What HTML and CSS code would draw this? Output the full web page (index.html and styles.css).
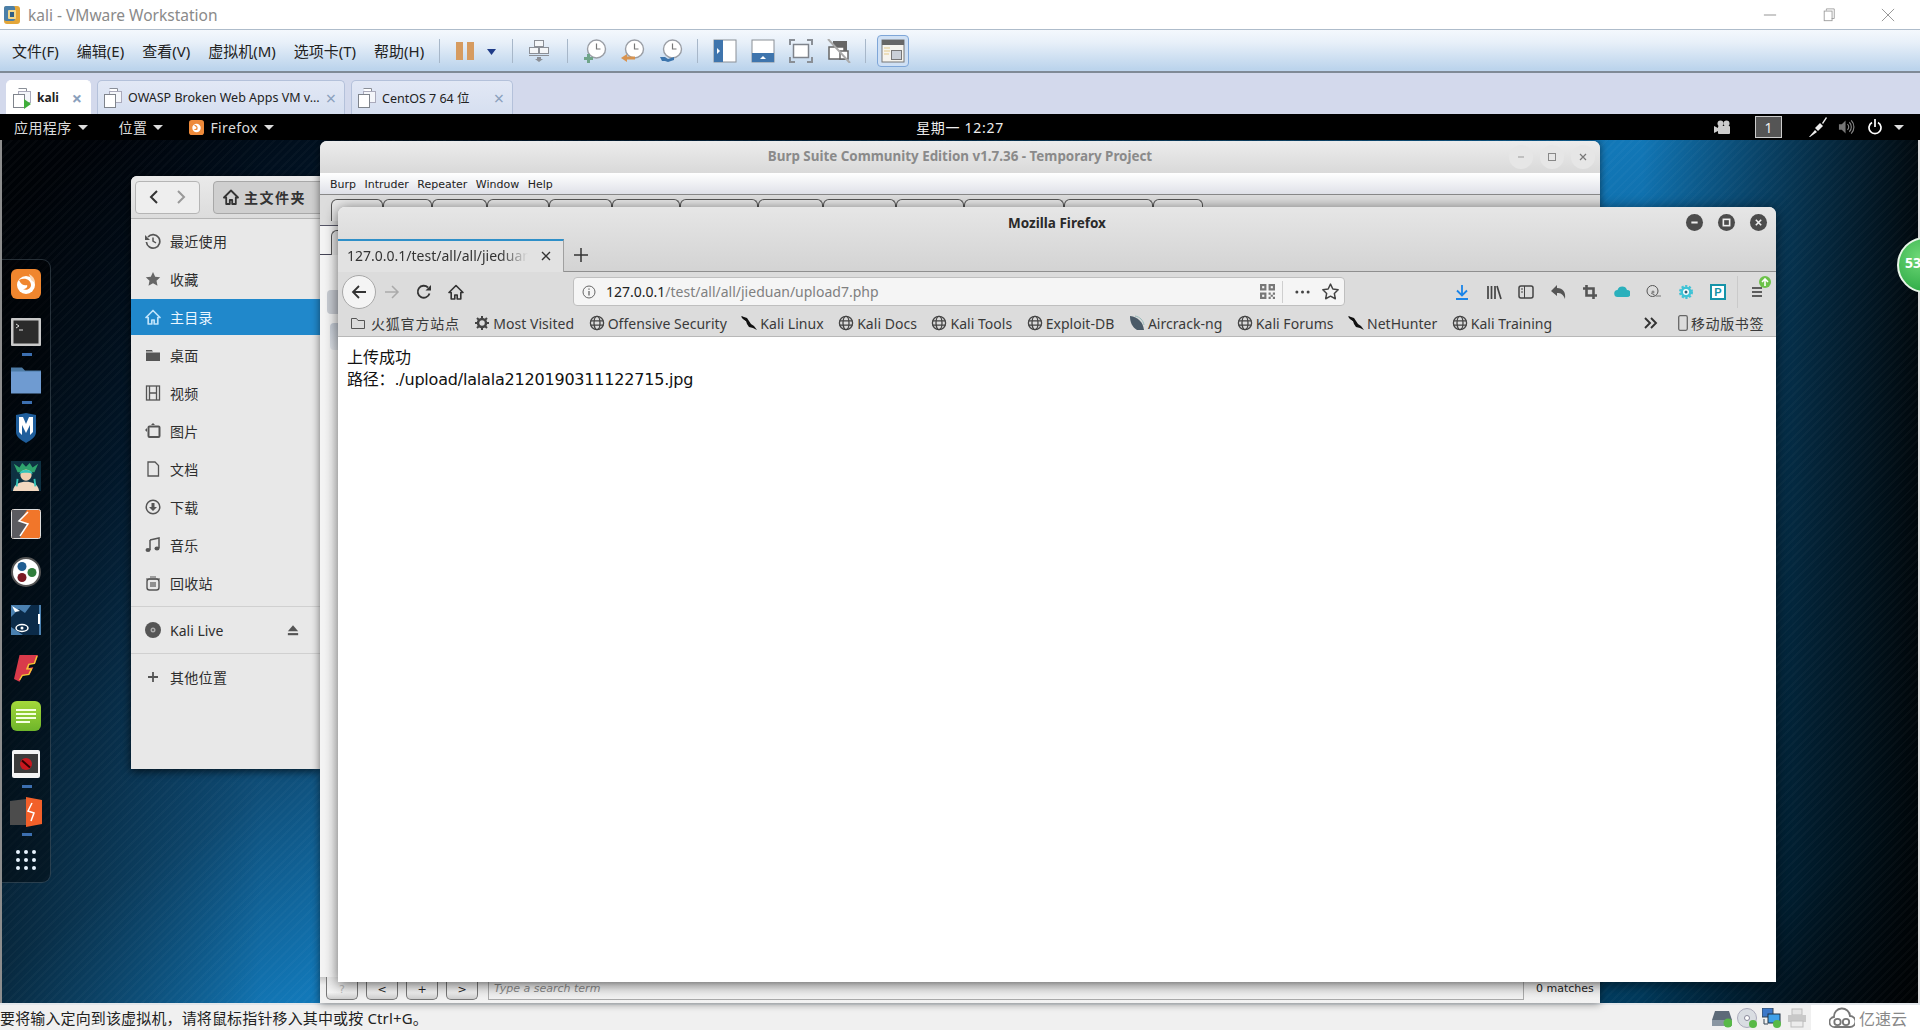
FILE: index.html
```html
<!DOCTYPE html>
<html lang="zh-CN">
<head>
<meta charset="utf-8">
<title>kali - VMware Workstation</title>
<link rel="stylesheet" href="styles.css">
</head>
<body>
<svg class="defs" width="0" height="0">
  <symbol id="globe" viewBox="0 0 16 16"><g fill="none" stroke="#444" stroke-width="1.3"><circle cx="8" cy="8" r="6.6"/><ellipse cx="8" cy="8" rx="3" ry="6.6"/><path d="M1.6 5.8h12.8M1.6 10.2h12.8"/></g></symbol>
  <symbol id="dragon" viewBox="0 0 16 16"><path d="M0 1l3 1 3 1 2 3 2 3 3 2 3 4-4-2-4-1-2-3-1-3-3-2z" fill="#111"/><path d="M1 2l5 4" stroke="#111" stroke-width="1.4"/></symbol>
  <symbol id="page" viewBox="0 0 20 22"><path d="M6.5 1.5h8v3h4v11h-6" fill="#fff" stroke="#8a8f98"/><rect x="6.5" y="4.5" width="12" height="11" fill="#f4f6fa" stroke="#aab"/><rect x="1.5" y="7.5" width="11" height="13" fill="#fff" stroke="#7f848c"/></symbol>
</svg>
<div class="app">
  <header class="titlebar">
    <svg class="vmlogo" viewBox="0 0 18 20"><rect x="1" y="1" width="16" height="18" rx="3" fill="#e3a63a"/><rect x="1" y="1" width="11" height="15" rx="2" fill="#4b7fa8"/><rect x="5" y="5" width="8" height="9" rx="1" fill="#f4d98c"/><rect x="7" y="7" width="4" height="5" fill="#2f5f86"/></svg>
    <span class="apptitle">kali - VMware Workstation</span>
    <div class="winctl">
      <svg viewBox="0 0 16 16"><path d="M1 8h14" stroke="#9a9a9a" stroke-width="1.2"/></svg>
      <svg viewBox="0 0 16 16"><path d="M5 3V1h9v11h-3" fill="none" stroke="#9a9a9a"/><rect x="2.500" y="3.500" width="9" height="11" fill="none" stroke="#9a9a9a"/></svg>
      <svg viewBox="0 0 16 16"><path d="M1 1l14 14M15 1L1 15" stroke="#8a8a8a"/></svg>
    </div>
  </header>

  <nav class="toolbar">
    <ul class="menus">
      <li>文件(F)</li><li>编辑(E)</li><li>查看(V)</li><li>虚拟机(M)</li><li>选项卡(T)</li><li>帮助(H)</li>
    </ul>
    <div class="tbgroup first">
      <svg class="tb18" viewBox="0 0 18 24"><rect y="3" width="7" height="18" fill="#d69b60"/><rect x="11" y="3" width="7" height="18" fill="#d69b60"/></svg>
      <svg class="tb9" viewBox="0 0 9 24"><path d="M0 10h9l-4.500 6z" fill="#1f3c88"/></svg>
    </div>
    <div class="tbgroup send">
      <svg class="tb20" viewBox="0 0 20 24"><g fill="#f4f6f8" stroke="#8b8f96"><rect x="5.500" y="1.500" width="9" height="6"/><rect x=".5" y="8.500" width="9" height="6"/><rect x="10.500" y="8.500" width="9" height="6"/></g><path d="M0 16.500h20" stroke="#8b8f96"/><path d="M8 18h4v2h2l-4 3-4-3h2z" fill="#8b8f96"/></svg>
    </div>
    <div class="tbgroup">
      <svg class="tb24" viewBox="0 0 24 24"><circle cx="13.500" cy="10" r="9" fill="#fff" stroke="#9a9ea5" stroke-width="1.400"/><path d="M13.500 4.500V10h4" fill="none" stroke="#777" stroke-width="1.200"/><path d="M4 15h3v3h3v3H7v3H4v-3H1v-3h3z" fill="#6fa58a"/></svg>
      <svg class="tb24" viewBox="0 0 24 24"><circle cx="13.500" cy="10" r="9" fill="#fff" stroke="#9a9ea5" stroke-width="1.400"/><path d="M13.500 4.500V10h4" fill="none" stroke="#777" stroke-width="1.200"/><path d="M0 19l6-4v2.500h8v3H6V23z" fill="#d8934f"/></svg>
      <svg class="tb24" viewBox="0 0 24 24"><circle cx="13.500" cy="10" r="9" fill="#fff" stroke="#9a9ea5" stroke-width="1.400"/><path d="M13.500 4.500V10h4" fill="none" stroke="#777" stroke-width="1.200"/><path d="M1 18h5l3 2 6-2v3l-6 2-3-1H3z" fill="#3c75ad"/></svg>
    </div>
    <div class="tbgroup last">
      <svg class="tb24" viewBox="0 0 24 24"><rect x="1" y="1" width="22" height="22" fill="#fff" stroke="#8a8f96"/><rect x="1" y="1" width="9" height="22" fill="#3f75ad"/><path d="M4 9l3 3-3 3z" fill="#fff"/></svg>
      <svg class="tb24" viewBox="0 0 24 24"><rect x="1" y="1" width="22" height="22" fill="#fff" stroke="#8a8f96"/><rect x="1" y="14" width="22" height="9" fill="#3f75ad"/><path d="M9 20l3-3 3 3z" fill="#fff"/></svg>
      <svg class="tb24" viewBox="0 0 24 24"><rect x="4.500" y="5.500" width="15" height="13" fill="#fff" stroke="#7f848c" stroke-width="1.500"/><path d="M1 6V1h5M18 1h5v5M23 18v5h-5M6 23H1v-5" fill="none" stroke="#8a8f96" stroke-width="2"/></svg>
      <svg class="tb24" viewBox="0 0 24 24"><rect x="6" y="2" width="14" height="13" fill="#666"/><rect x="2" y="8" width="15" height="12" fill="#fff" stroke="#666" stroke-width="1.500"/><rect x="13" y="12" width="8" height="8" fill="#fff" stroke="#666" stroke-width="1.500"/><path d="M1 0l22 24" stroke="#aaa" stroke-width="2"/></svg>
    </div>
    <button class="tbbtn" type="button" aria-label="库">
      <svg class="tb24" viewBox="0 0 24 24"><rect x="1" y="1" width="22" height="22" fill="#f6f4ee" stroke="#777"/><rect x="1" y="1" width="22" height="5" fill="#666"/><path d="M3 9h6M3 12h6M3 15h5" stroke="#e3c98a"/><rect x="10.500" y="11.500" width="10" height="9" fill="#c9cfd8" stroke="#777"/></svg>
    </button>
  </nav>

  <div class="tabstrip">
    <div class="vmtab active">
      <svg class="tabic" viewBox="0 0 20 22"><use href="#page"/><path d="M12 12l7 5-7 5z" fill="#3fae3a"/></svg>
      <span>kali</span><i>×</i>
    </div>
    <div class="vmtab owasp"><svg class="tabic" viewBox="0 0 20 22"><use href="#page"/></svg><span>OWASP Broken Web Apps VM v...</span><i>×</i></div>
    <div class="vmtab centos"><svg class="tabic" viewBox="0 0 20 22"><use href="#page"/></svg><span>CentOS 7 64 位</span><i>×</i></div>
  </div>

  <main class="guest">
    <div class="panel">
      <div class="pleft">
        <span class="pitem apps">应用程序<b class="caret"></b></span>
        <span class="pitem places">位置<b class="caret"></b></span>
        <span class="pitem fx">
          <svg class="pfx" viewBox="0 0 16 16"><rect width="16" height="16" rx="3" fill="#ee8a3a"/><circle cx="8" cy="8.500" r="4.500" fill="#fff"/><path d="M5 5c3 0 5 2 4 5-1 1-3 1-4 0 2 0 3-1 3-2z" fill="#ee8a3a"/></svg>
          Firefox<b class="caret"></b>
        </span>
      </div>
      <div class="pclock">星期一 12:27</div>
      <div class="pright">
        <svg class="pcam" viewBox="0 0 16 14"><circle cx="6.500" cy="3.500" r="3" fill="#ccc"/><circle cx="12.500" cy="3.500" r="3" fill="#ccc"/><rect x="4" y="6" width="12" height="8" rx="1" fill="#ccc"/><path d="M0 6l4 2v3l-4 2z" fill="#ccc"/></svg>
        <span class="wsbox">1</span>
        <svg class="pnet" viewBox="0 0 18 20"><path d="M0 20l6-7 2 2-7 5z" fill="#eee"/><path d="M6 11l5-5 3 3-5 5z" fill="#eee"/><path d="M13 6l4-6 1 1-4 6z" fill="#eee"/></svg>
        <svg class="pvol" viewBox="0 0 18 18"><path d="M1 6h3l4-4v14l-4-4H1z" fill="#777"/><path d="M10 6a4 4 0 010 6M12 4a7 7 0 010 10M14 2a10 10 0 010 14" fill="none" stroke="#888" stroke-width="1.200"/></svg>
        <svg class="ppow" viewBox="0 0 14 16"><path d="M4 3.500a6 6 0 106 0" fill="none" stroke="#fff" stroke-width="1.700"/><path d="M7 0v8" stroke="#fff" stroke-width="1.700"/></svg>
        <b class="caret"></b>
      </div>
    </div>

    <div class="desktop">
      <aside class="dock">
        <div class="dockitem"><svg viewBox="0 0 30 30"><rect width="30" height="30" rx="6" fill="#f0862e"/><circle cx="15" cy="16" r="9" fill="#fff"/><path d="M8 11c6-3 12 0 12 5 0 4-5 6-8 4 3 0 5-2 4-4-2 1-6 0-8-5z" fill="#f0862e"/><path d="M18 5c4 2 6 5 6 9l-4-3z" fill="#fbd9b8"/></svg></div>
        <div class="dockitem run"><svg viewBox="0 0 30 28"><rect width="30" height="28" rx="1" fill="#c9c9c9"/><rect x="2.500" y="2.500" width="25" height="23" fill="#2b2b2b"/><path d="M5 6l3 2-3 2M8 12h4" stroke="#ddd" fill="none"/></svg></div>
        <div class="dockitem run"><svg viewBox="0 0 30 27"><path d="M0 2V1h11l3 3h16v5H0z" fill="#4d7ba6"/><rect y="5" width="30" height="22" fill="#6f9bd1"/></svg></div>
        <div class="dockitem"><svg class="d-tall" viewBox="0 0 24 30"><path d="M12 0l10 2v17c0 5-5 8-10 11C7 27 2 24 2 19V2z" fill="#1f5e9c"/><path d="M5 4h4l3 7 3-7h4v15l-3 3V12l-4 8-4-8v10l-3-3z" fill="#fff"/></svg></div>
        <div class="dockitem"><svg viewBox="0 0 32 32"><rect width="32" height="32" fill="#0e3142"/><path d="M7 12L3 3l6 4 3-5 4 4 4-4 3 5 6-4-4 9z" fill="#2fa36d"/><circle cx="16" cy="15" r="6" fill="#f2cfb0"/><path d="M9 14c0-6 14-6 14 0-3-2-11-2-14 0z" fill="#35c4b8"/><path d="M2 32c1-8 8-10 14-10s13 2 14 10z" fill="#f2d8c0"/><path d="M7 19l-1 8M25 19l1 8" stroke="#35c4b8" stroke-width="2"/></svg></div>
        <div class="dockitem"><svg viewBox="0 0 30 30"><rect x=".5" y=".5" width="29" height="29" rx="2" fill="#f1762a" stroke="#ddd"/><path d="M1 1h15l-7 11 8 3-8 14H1z" fill="#5b5b60"/><path d="M17 3L8 12l9 3-8 12" fill="none" stroke="#fff" stroke-width="1.500"/></svg></div>
        <div class="dockitem"><svg viewBox="0 0 30 30"><circle cx="15" cy="15" r="14" fill="#fff" stroke="#555" stroke-width="2"/><circle cx="11" cy="9.500" r="4.500" fill="#1f5d91"/><circle cx="21" cy="15.500" r="4.500" fill="#2f7d3b"/><circle cx="11" cy="20.500" r="4.500" fill="#7a1a24"/></svg></div>
        <div class="dockitem"><svg viewBox="0 0 30 30"><rect width="30" height="30" fill="#4a80b0"/><path d="M0 12L8 4l6 4 6-8h8v30H12L0 22z" fill="#0b2b49"/><path d="M1 1l8 5-5 1z" fill="#fff"/><ellipse cx="11" cy="23" rx="6" ry="3.500" fill="none" stroke="#fff" stroke-width="1.500"/><circle cx="11" cy="23" r="1.500" fill="#fff"/><path d="M28 9v10" stroke="#fff" stroke-width="2"/></svg></div>
        <div class="dockitem"><svg class="d-tall" viewBox="0 0 26 30"><path d="M6 1h20l-3 9-6 1-1 4 5-1-4 8-8 1-3 7-6-3z" fill="#d93a4a"/><path d="M25 2l-3 8-6 1-2 5h5l-3 6-7 1-3 5" fill="none" stroke="#f3c934" stroke-width="1.500"/></svg></div>
        <div class="dockitem"><svg viewBox="0 0 30 30"><defs><linearGradient id="gn" x1="0" y1="0" x2="0" y2="1"><stop offset="0" stop-color="#a4d93a"/><stop offset="1" stop-color="#6eb52a"/></linearGradient></defs><rect width="30" height="30" rx="6" fill="url(#gn)"/><path d="M5 9h20M5 13h20M5 17h20M5 21h14" stroke="#f4ffe0" stroke-width="2"/></svg></div>
        <div class="dockitem run"><svg class="d-w28" viewBox="0 0 28 28"><rect width="28" height="28" rx="2" fill="#f4f4f4"/><rect x="2" y="4" width="24" height="19" fill="#3b3b3b"/><circle cx="14" cy="14" r="6" fill="#c9171e"/><path d="M10 10.500l8 7" stroke="#300" stroke-width="2"/></svg></div>
        <div class="dockitem run"><svg class="d-wide" viewBox="0 0 32 30"><path d="M0 4l16-2v26L0 28z" fill="#4c4c4c"/><path d="M16 0l16 3v24l-16 3z" fill="#f2602a"/><path d="M22 6l-4 8 6 2-3 8" fill="none" stroke="#fff" stroke-width="1.500"/></svg></div>
        <div class="dockitem"><svg class="d-grid" viewBox="0 0 20 20"><g fill="#e8f4ff"><circle cx="2" cy="2" r="2"/><circle cx="10" cy="2" r="2"/><circle cx="18" cy="2" r="2"/><circle cx="2" cy="10" r="2"/><circle cx="10" cy="10" r="2"/><circle cx="18" cy="10" r="2"/><circle cx="2" cy="18" r="2"/><circle cx="10" cy="18" r="2"/><circle cx="18" cy="18" r="2"/></g></svg></div>
      </aside>

      <section class="files win">
        <div class="fhead">
          <div class="fnav">
            <svg viewBox="0 0 12 14"><path d="M9 1L3 7l6 6" fill="none" stroke="#333" stroke-width="2"/></svg>
            <svg viewBox="0 0 12 14"><path d="M3 1l6 6-6 6" fill="none" stroke="#999" stroke-width="2"/></svg>
          </div>
          <div class="fpath">
            <svg class="si" viewBox="0 0 16 16"><path d="M8 1.500L1 8.500h2.200V15h3.600v-4h2.400v4h3.600V8.500H15z" fill="none" stroke="#333" stroke-width="1.800" stroke-linejoin="round"/></svg>
            <span>主文件夹</span>
          </div>
        </div>
        <ul class="fside">
          <li><svg class="si" viewBox="0 0 16 16"><path d="M3 4a6.700 6.700 0 11-1.600 5" fill="none" stroke="#555" stroke-width="1.700"/><path d="M0 2v5h5z" fill="#555"/><path d="M8 4.500V8l3 2" fill="none" stroke="#555" stroke-width="1.500"/></svg>最近使用</li>
          <li><svg class="si" viewBox="0 0 16 16"><path d="M8 1l2.200 4.700 5 .6-3.700 3.500 1 5L8 12.300 3.500 14.800l1-5L.8 6.300l5-.6z" fill="#666"/></svg>收藏</li>
          <li class="sel"><svg class="si" viewBox="0 0 16 16"><path d="M8 1.500L1 8.500h2.200V15h3.600v-4h2.400v4h3.600V8.500H15z" fill="none" stroke="#bfe3fa" stroke-width="1.700" stroke-linejoin="round"/></svg>主目录</li>
          <li><svg class="si" viewBox="0 0 16 16"><path d="M1 3h6l1 2h7v9H1z" fill="#555"/><path d="M1 5h14" stroke="#e8e8e8"/></svg>桌面</li>
          <li><svg class="si" viewBox="0 0 16 16"><rect x="1.500" y="1" width="13" height="14" fill="none" stroke="#555" stroke-width="1.300"/><path d="M4.500 1v14M11.500 1v14M4.500 8h7" stroke="#555" stroke-width="1.300"/></svg>视频</li>
          <li><svg class="si" viewBox="0 0 16 16"><rect x="3.500" y="3.500" width="11" height="10.500" rx="1" fill="none" stroke="#555" stroke-width="2"/><path d="M6 2l2-2 2 2zM0 7l2-2v4z" fill="#555"/></svg>图片</li>
          <li><svg class="si" viewBox="0 0 16 16"><path d="M3 1h7l3.500 3.500V15H3z" fill="none" stroke="#555" stroke-width="1.300"/></svg>文档</li>
          <li><svg class="si" viewBox="0 0 16 16"><circle cx="8" cy="8" r="6.800" fill="none" stroke="#555" stroke-width="1.500"/><path d="M6.500 4h3v4H12l-4 4-4-4h2.500z" fill="#555"/></svg>下载</li>
          <li><svg class="si" viewBox="0 0 16 16"><path d="M5 3l9-2v10" fill="none" stroke="#555" stroke-width="1.500"/><path d="M5 3v10" stroke="#555" stroke-width="1.500"/><ellipse cx="3" cy="13" rx="2.500" ry="2" fill="#555"/><ellipse cx="12" cy="11.500" rx="2.500" ry="2" fill="#555"/></svg>音乐</li>
          <li><svg class="si" viewBox="0 0 16 16"><rect x="2" y="4" width="12" height="11" rx="2.500" fill="none" stroke="#555" stroke-width="1.400"/><path d="M1 4h14M5 2h6M6 7v5M8 7v5M10 7v5" stroke="#555" stroke-width="1.200"/></svg>回收站</li>
          <li class="rule"></li>
          <li class="live"><svg class="si" viewBox="0 0 16 16"><circle cx="8" cy="8" r="8" fill="#555"/><circle cx="8" cy="8" r="2.500" fill="#aaa"/><circle cx="8" cy="8" r="1" fill="#555"/></svg><span class="en">Kali Live</span><svg class="eject" viewBox="0 0 14 12"><path d="M7 0l6 7H1z" fill="#555"/><rect x="1" y="9" width="12" height="2.500" fill="#555"/></svg></li>
          <li class="rule second"></li>
          <li class="other"><svg class="si" viewBox="0 0 16 16"><path d="M8 3v10M3 8h10" stroke="#555" stroke-width="1.800"/></svg>其他位置</li>
        </ul>
      </section>

      <section class="burp win">
        <div class="bhead">
          <span>Burp Suite Community Edition v1.7.36 - Temporary Project</span>
          <div class="bctl">
            <i><svg viewBox="0 0 10 10"><path d="M2 5h6" stroke="#999"/></svg></i>
            <i><svg viewBox="0 0 10 10"><rect x="1.500" y="1.500" width="7" height="7" fill="none" stroke="#888"/></svg></i>
            <i><svg viewBox="0 0 10 10"><path d="M2 2l6 6M8 2l-6 6" stroke="#777" stroke-width="1.200"/></svg></i>
          </div>
        </div>
        <div class="bmenu"><span>Burp</span><span>Intruder</span><span>Repeater</span><span>Window</span><span>Help</span></div>
        <div class="btabs"><i></i><i></i><i></i><i></i><i></i><i></i><i></i><i></i><i></i><i></i><i></i><i></i><i></i></div>
        <div class="bbody">
          <div class="bsub"><i></i></div>
          <div class="bpill"></div>
          <div class="bpill two"></div>
        </div>
        <div class="bfoot">
          <button type="button" class="q">?</button><button type="button">&lt;</button><button type="button">+</button><button type="button">&gt;</button>
          <div class="bsearch">Type a search term</div>
          <span class="bmatch">0 matches</span>
        </div>
      </section>

      <section class="firefox win">
        <div class="ffhead">
          <div class="fftitle">
            <span></span>
            <strong>Mozilla Firefox</strong>
            <div class="ffctl">
              <i><svg viewBox="0 0 10 10"><path d="M1.500 5h7" stroke="#eee" stroke-width="2"/></svg></i>
              <i><svg viewBox="0 0 10 10"><rect x="1.500" y="1.500" width="7" height="7" fill="none" stroke="#eee" stroke-width="1.800"/></svg></i>
              <i><svg viewBox="0 0 10 10"><path d="M2 2l6 6M8 2l-6 6" stroke="#eee" stroke-width="1.800"/></svg></i>
            </div>
          </div>
          <div class="fftabs">
            <div class="fftab"><span>127.0.0.1/test/all/all/jieduan</span><svg class="x" viewBox="0 0 10 10"><path d="M1 1l8 8M9 1L1 9" stroke="#333" stroke-width="1.400"/></svg></div>
            <svg class="plus" viewBox="0 0 14 14"><path d="M7 0v14M0 7h14" stroke="#333" stroke-width="1.500"/></svg>
          </div>
        </div>
        <div class="ffnav">
          <div class="back"><svg viewBox="0 0 16 16"><path d="M15 8H2M8 2L2 8l6 6" fill="none" stroke="#333" stroke-width="1.800"/></svg></div>
          <svg class="ni" viewBox="0 0 16 16"><path d="M1 8h13M8 2l6 6-6 6" fill="none" stroke="#aaa" stroke-width="1.500"/></svg>
          <svg class="ni" viewBox="0 0 16 16"><path d="M13.500 9.500A6 6 0 1112 3.500" fill="none" stroke="#333" stroke-width="1.800"/><path d="M15 1v5.500H9.500z" fill="#333"/></svg>
          <svg class="ni" viewBox="0 0 16 16"><path d="M8 1.500L1 8.500h2.200V15h3.600v-4h2.400v4h3.600V8.500H15z" fill="none" stroke="#333" stroke-width="1.600" stroke-linejoin="round"/></svg>
          <div class="urlbar">
            <svg class="info" viewBox="0 0 14 14"><circle cx="7" cy="7" r="6" fill="none" stroke="#666"/><path d="M7 6v4.500M7 3.500v1.300" stroke="#666" stroke-width="1.300"/></svg>
            <span class="url"><b>127.0.0.1</b>/test/all/all/jieduan/upload7.php</span>
            <svg class="qr" viewBox="0 0 14 14"><g fill="#777"><path d="M0 0h6v6H0zM8 0h6v6H8zM0 8h6v6H0z"/><path d="M8 8h2v2H8zM12 8h2v2h-2zM10 10h2v2h-2zM8 12h2v2H8zM12 12h2v2h-2z"/></g><g fill="#f5f5f5"><rect x="2" y="2" width="2" height="2"/><rect x="10" y="2" width="2" height="2"/><rect x="2" y="10" width="2" height="2"/></g></svg>
            <i class="usep"></i>
            <svg class="dots" viewBox="0 0 16 4"><circle cx="2" cy="2" r="1.600" fill="#444"/><circle cx="8" cy="2" r="1.600" fill="#444"/><circle cx="14" cy="2" r="1.600" fill="#444"/></svg>
            <svg class="star" viewBox="0 0 16 16"><path d="M8 1l2.200 4.600 5 .7-3.600 3.500.9 5L8 12.400 3.500 14.800l.9-5L.8 6.300l5-.7z" fill="none" stroke="#444" stroke-width="1.400" stroke-linejoin="round"/></svg>
          </div>
          <div class="fftools">
            <svg class="ni" viewBox="0 0 16 16"><path d="M8 1v10M3 6.500L8 11.500l5-5M2 15h12" fill="none" stroke="#1a84e8" stroke-width="1.800"/></svg>
            <svg class="ni" viewBox="0 0 16 16"><path d="M2 2v13M5.500 2v13M9 2v13M11 2l4 13" stroke="#444" stroke-width="1.700"/></svg>
            <svg class="ni" viewBox="0 0 16 16"><rect x="1" y="2" width="14" height="12" rx="2" fill="none" stroke="#444" stroke-width="1.500"/><path d="M6.500 2v12M3 5h2M3 8h2" stroke="#444"/></svg>
            <svg class="ni" viewBox="0 0 16 16"><path d="M7 1L1 7l6 5V9c4 0 6 1 8 6 1-7-2-11-8-11z" fill="#555"/></svg>
            <svg class="ni" viewBox="0 0 16 16"><path d="M4.500 1v10.500H15M1 4.500h10.500V15" fill="none" stroke="#555" stroke-width="2.600"/></svg>
            <svg class="ni" viewBox="0 0 16 16"><path d="M4 13a3.500 3.500 0 01-.5-7A5 5 0 0113 6a3.500 3.500 0 010 7z" fill="#2ab0bc"/></svg>
            <svg class="ni" viewBox="0 0 16 16"><circle cx="6.500" cy="7" r="5.500" fill="none" stroke="#555"/><path d="M5 9l5 3h5" fill="none" stroke="#777"/><circle cx="7" cy="8" r="1.500" fill="#888"/></svg>
            <svg class="ni" viewBox="0 0 16 16"><circle cx="8" cy="8" r="5.500" fill="#3fc3d6" stroke="#3fc3d6" stroke-width="3" stroke-dasharray="2 1.500"/><circle cx="8" cy="8" r="3" fill="#fff"/><circle cx="8" cy="8" r="1.500" fill="#2b5f78"/></svg>
            <svg class="ni" viewBox="0 0 16 16"><rect x="1" y="1" width="14" height="14" fill="#fff" stroke="#1593a8" stroke-width="2"/><text x="8" y="12" class="ptext">P</text></svg>
            <i class="tsep"></i>
            <div class="menuwrap">
              <svg class="ni" viewBox="0 0 16 16"><path d="M3 4h10M3 8h10M3 12h10" stroke="#333" stroke-width="1.700"/></svg>
              <svg class="badge" viewBox="0 0 12 12"><circle cx="6" cy="6" r="6" fill="#6cc24a"/><path d="M6 10V3M3 6l3-3 3 3" fill="none" stroke="#fff" stroke-width="1.600"/></svg>
            </div>
          </div>
        </div>
        <div class="ffbm">
          <span class="bm cn"><svg viewBox="0 0 16 16"><path d="M1.500 3.500h5l1.500 2h6.500v8h-13z" fill="none" stroke="#555"/></svg>火狐官方站点</span>
          <span class="bm"><svg viewBox="0 0 16 16"><circle cx="8" cy="8" r="4" fill="none" stroke="#444" stroke-width="2.500"/><path d="M8 1v3M8 12v3M1 8h3M12 8h3M3 3l2 2M11 11l2 2M13 3l-2 2M5 11l-2 2" stroke="#444" stroke-width="2"/></svg>Most Visited</span>
          <span class="bm"><svg><use href="#globe"/></svg>Offensive Security</span>
          <span class="bm"><svg><use href="#dragon"/></svg>Kali Linux</span>
          <span class="bm"><svg><use href="#globe"/></svg>Kali Docs</span>
          <span class="bm"><svg><use href="#globe"/></svg>Kali Tools</span>
          <span class="bm"><svg><use href="#globe"/></svg>Exploit-DB</span>
          <span class="bm"><svg viewBox="0 0 16 16"><path d="M1 1c8 1 13 6 14 14H8C3 12 1 7 1 1z" fill="#4a5a68"/><path d="M6 1c5 1 8 4 9 9" fill="none" stroke="#9bb" /></svg>Aircrack-ng</span>
          <span class="bm"><svg><use href="#globe"/></svg>Kali Forums</span>
          <span class="bm"><svg><use href="#dragon"/></svg>NetHunter</span>
          <span class="bm"><svg><use href="#globe"/></svg>Kali Training</span>
          <span class="bmend">
            <svg class="more" viewBox="0 0 14 12"><path d="M1 1l5 5-5 5M7 1l5 5-5 5" fill="none" stroke="#333" stroke-width="1.900"/></svg>
            <svg class="phone" viewBox="0 0 10 16"><rect x=".7" y=".7" width="8.600" height="14.600" rx="1.500" fill="none" stroke="#666" stroke-width="1.300"/></svg>
            移动版书签
          </span>
        </div>
        <article class="ffpage">
          <p>上传成功</p>
          <p class="path">路径：./upload/lalala2120190311122715.jpg</p>
        </article>
      </section>

      <div class="ballwrap"><span>53</span></div>
    </div>
  </main>

  <footer class="status">
    <span class="hint">要将输入定向到该虚拟机，请将鼠标指针移入其中或按 Ctrl+G。</span>
    <div class="devices">
      <svg viewBox="0 0 20 20"><path d="M3 3h14l3 9v6H0v-6z" fill="#5d6a78"/><rect y="12" width="20" height="6" fill="#8a96a2"/><circle cx="16" cy="15" r="4.500" fill="#58b947"/></svg>
      <svg viewBox="0 0 20 20"><circle cx="10" cy="10" r="9.500" fill="#d9dde2" stroke="#aab"/><circle cx="10" cy="10" r="2.500" fill="#fff" stroke="#889"/><circle cx="16" cy="16" r="4" fill="#58b947"/></svg>
      <svg viewBox="0 0 20 20"><rect width="11" height="9" fill="#3c78c8" stroke="#345"/><rect x="6" y="6" width="12" height="9" fill="#3fa0e8" stroke="#234"/><path d="M2 11v5h4" fill="none" stroke="#345"/><circle cx="15" cy="16" r="4" fill="#58b947"/></svg>
      <svg viewBox="0 0 20 20"><rect x="5" y="1" width="10" height="6" fill="#e4e4e4" stroke="#bbb"/><rect x="1" y="7" width="18" height="7" fill="#c8c8c8"/><rect x="4" y="13" width="12" height="6" fill="#ececec" stroke="#bbb"/></svg>
    </div>
    <div class="mark">
      <svg viewBox="0 0 26 22"><path d="M6 20a5 5 0 01-1-10 8 8 0 0116-1 5.500 5.500 0 010 11z" fill="none" stroke="#777" stroke-width="1.800"/><circle cx="8.500" cy="15" r="3.200" fill="none" stroke="#777" stroke-width="1.800"/><circle cx="17" cy="15" r="3.200" fill="none" stroke="#777" stroke-width="1.800"/></svg>
      <span>亿速云</span>
    </div>
  </footer>
</div>
</body>
</html>
```
FILE: styles.css
```css
* { box-sizing: border-box; }
html, body { margin: 0; padding: 0; }
body { font-family: "Noto Sans", "Noto Sans CJK SC", sans-serif; color: #222; }
ul { list-style: none; margin: 0; padding: 0; }
i { font-style: normal; }
svg { display: block; flex: none; }
.defs { position: absolute; }

.app { width: 1920px; height: 1030px; display: flex; flex-direction: column; overflow: hidden; background: #fff; }

/* VMware chrome */
.titlebar { height: 29px; flex: none; display: flex; align-items: center; padding-left: 3px; background: #fff; }
.vmlogo { width: 18px; height: 20px; }
.apptitle { margin-left: 7px; font-size: 15.500px; color: #8a8a8a; }
.winctl { margin-left: auto; display: flex; gap: 45px; padding-right: 25px; }
.winctl svg { width: 14px; height: 14px; }

.toolbar { height: 44px; flex: none; display: flex; align-items: center; background: linear-gradient(#f4f8fd, #e8f0f9 30%, #bcd4ec 95%); border-top: 1px solid #aebccb; border-bottom: 2px solid #7f8a96; }
.menus { width: 439px; flex: none; padding-left: 12px; display: flex; gap: 18px; font-size: 15px; color: #222; }
.tbgroup { height: 24px; display: flex; align-items: center; gap: 14px; padding: 0 14px 0 15px; border-left: 1px solid #a7b7c9; }
.tbgroup.first { padding: 0 16px; gap: 13px; }
.tbgroup.send { padding: 0 18px 0 16px; }
.tbgroup.last { border-right: 1px solid #a7b7c9; margin-right: 11px; }
.tb18 { width: 18px; height: 24px; }
.tb9 { width: 9px; height: 24px; }
.tb20 { width: 20px; height: 24px; }
.tb24 { width: 24px; height: 24px; }
.tbbtn { width: 32px; height: 32px; padding: 3px; border: 1px solid #7ea6d8; border-radius: 4px; background: #cfe0f4; }

.tabstrip { height: 41px; flex: none; display: flex; align-items: flex-end; gap: 6px; padding-left: 6px; background: #d3d9ec; }
.vmtab { height: 34px; display: flex; align-items: center; gap: 5px; padding: 0 8px 0 5px; border: 1px solid #b4c1da; border-bottom: 0; border-radius: 5px 5px 0 0; background: linear-gradient(#e2e8f5, #d6dff0); font-size: 12.500px; color: #222; }
.vmtab i { margin-left: auto; font-size: 18px; line-height: 1; color: #8aa0bc; }
.vmtab.active { width: 85px; background: #fff; border-color: #fff; font-weight: 700; font-size: 12px; }
.owasp { width: 248px; }
.centos { width: 162px; }
.tabic { width: 20px; height: 22px; }

/* Guest */
.guest { flex: 1; position: relative; display: flex; flex-direction: column; min-height: 0; }
.panel { height: 26px; flex: none; display: grid; grid-template-columns: 1fr auto 1fr; align-items: center; background: #000; color: #ddd; font-size: 14px; }
.pleft { display: flex; align-items: center; padding-left: 14px; }
.pitem { display: flex; align-items: center; letter-spacing: .4px; }
.apps { margin-right: 31px; }
.places { margin-right: 26px; }
.caret { display: block; width: 0; height: 0; margin-left: 6px; border: 5px solid transparent; border-top: 5px solid #ddd; border-bottom: 0; }
.pfx { width: 15px; height: 15px; margin-right: 6px; }
.pclock { color: #eee; letter-spacing: .7px; }
.pright { display: flex; align-items: center; justify-content: flex-end; padding-right: 16px; }
.pcam { width: 16px; height: 14px; margin-right: 25px; }
.wsbox { width: 27px; height: 22px; margin-right: 27px; display: flex; align-items: center; justify-content: center; background: #555; border: 1px solid #ccc; font-size: 14px; color: #eee; }
.pnet { width: 18px; height: 20px; margin-right: 11px; }
.pvol { width: 17px; height: 18px; margin-right: 13px; }
.ppow { width: 14px; height: 16px; margin-right: 6px; }

.desktop { flex: 1; min-height: 0; border-left: 2px solid #8d8d8d; border-right: 2px solid #ddd;
  background:
    repeating-linear-gradient(135deg, rgba(255,255,255,.022) 0 2px, transparent 2px 6px),
    linear-gradient(90deg, rgba(0,0,0,.5), transparent 260px, transparent 1640px, rgba(0,0,0,.9)),
    linear-gradient(147deg, #00050d 3%, #021f38 19%, #0a3d62 30%, #0f4f7a 39%, #1278b8 50%, #0a5b8f 64%, #013a5c 91%, #00111f 100%);
}

.dock { position: absolute; left: 2px; top: 145px; width: 49px; height: 624px; display: flex; flex-direction: column; align-items: center; background: rgba(0,0,0,.42); border: 1px solid rgba(150,180,200,.25); border-left: 0; border-radius: 0 9px 9px 0; }
.dockitem { width: 100%; height: 48px; flex: none; position: relative; display: flex; align-items: center; justify-content: center; }
.dockitem svg { width: 30px; height: 30px; }
.dockitem .d-tall { width: 24px; }
.dockitem .d-w28 { width: 28px; height: 28px; }
.dockitem .d-wide { width: 32px; }
.dockitem .d-grid { width: 20px; height: 20px; }
.dockitem.run::after { content: ""; position: absolute; left: 20px; bottom: 0; width: 10px; height: 3px; background: #3c6fb0; }

.win { position: absolute; display: flex; flex-direction: column; overflow: hidden; }

/* Files */
.files { left: 131px; top: 62px; width: 189px; height: 593px; background: #e8e8e8; border-radius: 6px 0 0 0; box-shadow: 0 2px 10px rgba(0,0,0,.7); }
.fhead { height: 43px; flex: none; display: flex; align-items: center; padding-left: 4px; gap: 13px; background: linear-gradient(#eaeaea, #dcdcdc); border-bottom: 1px solid #b5b5b5; }
.fnav { width: 65px; height: 33px; flex: none; display: flex; align-items: center; justify-content: space-between; padding: 0 12px; background: #eee; border: 1px solid #b5b5b5; border-radius: 4px; }
.fnav svg { width: 12px; height: 14px; }
.fpath { width: 130px; height: 33px; flex: none; display: flex; align-items: center; gap: 5px; padding-left: 9px; background: #cfcfcf; border: 1px solid #a8a8a8; border-radius: 4px; font-size: 14px; font-weight: 700; letter-spacing: 1.500px; color: #333; }
.si { width: 16px; height: 16px; }
.fside { padding-top: 3px; font-size: 14px; letter-spacing: .3px; color: #2e2e2e; }
.fside li { height: 38px; display: flex; align-items: center; gap: 9px; padding-left: 14px; }
.fside .sel { height: 36px; margin: 1px 0; background: #2088cb; color: #eaf6ff; }
.fside .rule { height: 1px; padding: 0; margin: 4px 0 0; background: #d0d0d0; }
.fside .rule.second { margin-top: 0; }
.fside .live { height: 46px; padding-right: 23px; }
.fside .en { letter-spacing: 0; }
.fside .eject { width: 12px; height: 11px; margin-left: auto; margin-right: -2px; }
.fside .other { height: 46px; }

/* Burp */
.burp { left: 320px; top: 27px; width: 1280px; height: 862px; background: #f2f3f6; border-radius: 7px 7px 0 0; box-shadow: 0 0 8px rgba(0,0,0,.55); }
.bhead { height: 32px; flex: none; position: relative; display: flex; align-items: center; justify-content: center; padding-bottom: 2px; background: linear-gradient(#ececec, #d9d9d9); font-size: 13.400px; font-weight: 700; color: #8a8a8a; }
.bctl { position: absolute; right: 5px; top: 4px; display: flex; gap: 7px; }
.bctl i { width: 24px; height: 24px; display: flex; align-items: center; justify-content: center; border-radius: 50%; background: #e6e6e6; }
.bctl svg { width: 10px; height: 10px; }
.bmenu { height: 22px; flex: none; display: flex; align-items: center; gap: 8.500px; padding: 2px 0 0 10px; background: linear-gradient(#fff, #dfe1e8); border-bottom: 1px solid #888; font-family: "DejaVu Sans", sans-serif; font-size: 11px; color: #222; }
.btabs { height: 30px; flex: none; display: flex; align-items: flex-start; padding: 4px 0 0 11px; background: #ddd; }
.btabs i { height: 22px; border: 1px solid #555; border-bottom: 0; border-radius: 6px 6px 0 0; background: #e8e8e8; flex: none; }
.btabs i:nth-child(1) { width: 52px; }
.btabs i:nth-child(2) { width: 49px; }
.btabs i:nth-child(3) { width: 55px; }
.btabs i:nth-child(4) { width: 62px; }
.btabs i:nth-child(5) { width: 63px; }
.btabs i:nth-child(6) { width: 68px; }
.btabs i:nth-child(7) { width: 78px; }
.btabs i:nth-child(8) { width: 65px; }
.btabs i:nth-child(9) { width: 73px; }
.btabs i:nth-child(10) { width: 68px; }
.btabs i:nth-child(11) { width: 100px; }
.btabs i:nth-child(12) { width: 89px; }
.btabs i:nth-child(13) { width: 50px; }
.bbody { flex: 1; min-height: 0; background: linear-gradient(90deg, #f4f4f4, #fff); }
.bsub { height: 30px; padding: 4px 0 0 11px; border-bottom: 1px solid #445; border-top: 1px solid #556; background: #f4f4f4; }
.bsub i { display: block; width: 12px; height: 25px; border: 1px solid #555; border-bottom: 0; border-right: 0; border-radius: 6px 0 0 0; background: #e8e8e8; }
.bpill { width: 12px; height: 24px; margin: 35px 0 0 7px; background: #c8ccd3; border-radius: 4px 0 0 4px; }
.bpill.two { height: 27px; margin-top: 9px; margin-left: 10px; background: linear-gradient(#c5ccd6, #e0e4ea); }
.bfoot { height: 26px; flex: none; display: flex; align-items: flex-start; gap: 8px; padding-left: 6px; background: linear-gradient(#c8c8c8 0, #efefef 8px, #f2f2f2); font-family: "DejaVu Sans", sans-serif; font-size: 11px; }
.bfoot button { width: 32px; height: 23px; padding: 3px 0 0; background: linear-gradient(#e8e8e8, #f4f4f4 70%, #ccc); border: 1px solid #777; border-top: 0; border-radius: 0 0 5px 5px; font: inherit; color: #222; }
.bfoot .q { color: #bbb; }
.bsearch { width: 1036px; height: 23px; margin-left: 2px; padding: 5px 5px 0; line-height: 13px; border: 1px solid #aaa; border-top: 0; font-style: italic; color: #888; }
.bmatch { margin-left: 4px; padding-top: 5px; line-height: 13px; color: #222; }

/* Firefox */
.firefox { left: 338px; top: 93px; width: 1438px; height: 775px; background: #fff; border-radius: 7px 7px 0 0; box-shadow: 0 2px 14px rgba(0,0,0,.6); }
.ffhead { flex: none; background: linear-gradient(#e6e6e6, #d3d3d3); }
.fftitle { height: 32px; padding-bottom: 1px; display: grid; grid-template-columns: 1fr auto 1fr; align-items: center; font-size: 13.500px; color: #2a2a2a; }
.ffctl { justify-self: end; display: flex; gap: 15px; padding-right: 9px; }
.ffctl i { width: 17px; height: 17px; display: flex; align-items: center; justify-content: center; border-radius: 50%; background: #4c4c4c; }
.ffctl svg { width: 9px; height: 9px; }
.fftabs { height: 33px; display: flex; align-items: center; border-bottom: 1px solid #8f8f8f; }
.fftab { width: 226px; height: 33px; display: flex; align-items: center; padding: 0 12px 1px 9px; background: #e2e2e2; border-top: 2px solid #2e8fc8; border-right: 1px solid #a0a0a0; font-size: 14px; color: #333; }
.fftab span { width: 181px; white-space: nowrap; overflow: hidden; -webkit-mask-image: linear-gradient(90deg, #000 85%, transparent); mask-image: linear-gradient(90deg, #000 85%, transparent); }
.x { width: 10px; height: 10px; margin-left: auto; }
.plus { width: 14px; height: 14px; margin-left: 10px; }
.ffnav { height: 39px; flex: none; display: flex; align-items: center; gap: 16px; padding-left: 4px; background: #dcdcdc; }
.back { width: 34px; height: 34px; margin-right: -8px; display: flex; align-items: center; justify-content: center; flex: none; border-radius: 50%; background: #f4f4f4; border: 1px solid #a8a8a8; }
.back svg { width: 16px; height: 16px; }
.ni { width: 16px; height: 16px; }
.urlbar { width: 772px; height: 29px; margin-left: 93px; flex: none; display: flex; align-items: center; padding: 0 5px 0 8px; background: #f5f5f5; border: 1px solid #bfbfbf; border-radius: 4px; }
.info { width: 14px; height: 14px; }
.url { margin-left: 10px; font-size: 14px; color: #808080; }
.url b { font-weight: 400; color: #222; }
.qr { width: 15px; height: 15px; margin-left: auto; }
.usep { width: 1px; height: 22px; margin: 0 12px 0 7px; background: #cfcfcf; }
.dots { width: 15px; height: 4px; }
.star { width: 17px; height: 17px; margin-left: 12px; }
.fftools { display: flex; align-items: center; gap: 16px; margin-left: 93px; }
.ptext { font: 700 11px "Liberation Sans", sans-serif; fill: #1593a8; text-anchor: middle; }
.tsep { width: 1px; height: 32px; margin: 0 -5px; background: #cacaca; }
.menuwrap { position: relative; }
.badge { position: absolute; right: -6px; top: -8px; width: 12px; height: 12px; }
.ffbm { height: 26px; flex: none; display: flex; align-items: center; gap: 14.500px; padding: 0 12px 1px 12px; background: #dcdcdc; border-bottom: 1px solid #b8b8b8; font-size: 14px; color: #3a3a3a; white-space: nowrap; }
.bm { display: flex; align-items: center; gap: 3px; letter-spacing: .03px; }
.bm.cn { gap: 5px; letter-spacing: .8px; }
.bm svg { width: 16px; height: 16px; }
.bmend { margin-left: auto; display: flex; align-items: center; gap: 0; letter-spacing: .6px; }
.more { width: 14px; height: 12px; margin-right: 20px; }
.phone { width: 10px; height: 16px; margin-right: 3px; }
.ffpage { flex: 1; padding: 10px 9px; background: #fff; font-family: "DejaVu Sans", "Noto Sans CJK SC", sans-serif; font-size: 16px; line-height: 22px; color: #111; }
.ffpage p { margin: 0; }
.ffpage .path { font-family: "DejaVu Sans", "Noto Sans CJK TC", sans-serif; letter-spacing: -.2px; }

.ballwrap { position: absolute; left: 1897px; top: 123px; width: 56px; height: 56px; padding: 14px 0 0 6px; border-radius: 50%; background: radial-gradient(circle at 40% 35%, #6fd877, #35b04c 70%); border: 2px solid #e8f5e8; font-size: 14px; font-weight: 700; color: #fff; }

/* Status */
.status { height: 27px; flex: none; display: flex; align-items: center; background: #f0f0f0; border-top: 2px solid #e2e6ea; font-size: 15px; color: #222; }
.hint { margin-top: -1px; letter-spacing: .14px; }
.devices { margin-left: auto; display: flex; gap: 5px; padding-right: 4px; }
.devices svg { width: 20px; height: 20px; }
.mark { width: 109px; height: 25px; flex: none; display: flex; align-items: center; gap: 4px; padding-left: 18px; background: #fff; color: #888; font-size: 16px; }
.mark svg { width: 26px; height: 22px; }
```
